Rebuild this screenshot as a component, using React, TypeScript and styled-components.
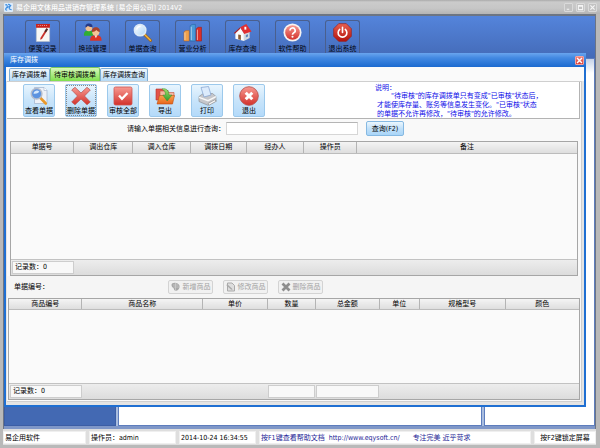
import React, { useState } from 'react';
import styled, { createGlobalStyle, css } from 'styled-components';

const GlobalStyle = createGlobalStyle`
  *, *::before, *::after { box-sizing: border-box; }
  html, body { margin: 0; padding: 0; }
  body, button, input, table {
    font-family: "DejaVu Sans Condensed", "Noto Sans CJK SC", sans-serif;
    font-size: 7px;
    line-height: 10px;
    color: #000;
  }
  button { cursor: pointer; }
`;

/* ---------- main window ---------- */

const Window = styled.div`
  position: relative;
  display: flex;
  flex-direction: column;
  min-height: 100vh;
  background: #b9b9b9;
  padding: 0 4px 3px 3px;
  overflow: hidden;
`;

const TitleBar = styled.header`
  display: flex;
  align-items: center;
  gap: 3px;
  height: 14px;
  margin: 0 -4px 0 -3px;
  padding: 1px 3px 0 4px;
  background: linear-gradient(#aaa 0, #cbcbcb 2px, #c6c6c6 60%, #b4b4b4);
  color: #fff;
`;

const TitleText = styled.h1`
  flex: 1;
  margin: 0;
  font-size: 7px;
  font-weight: 500;
  white-space: pre;
`;

const WindowButton = styled.button`
  display: flex;
  align-items: center;
  justify-content: center;
  width: 9px;
  height: 9px;
  padding: 0;
  border: 1px solid #dadada;
  border-radius: 1px;
  background: #c2c2c2;
`;

const Desktop = styled.main`
  flex: 1;
  display: flex;
  flex-direction: column;
  border: 1px solid #6c7484;
  border-top: 2px solid #6d7582;
  border-bottom: 0;
  background: #4369b3;
`;

const Ribbon = styled.nav`
  display: flex;
  gap: 15px;
  height: 42px;
  padding: 4px 21px 0;
  background: linear-gradient(#5484db, #446bb8);
`;

const RibbonButton = styled.button`
  display: flex;
  flex-direction: column;
  align-items: center;
  gap: 2px;
  width: 35px;
  height: 34px;
  padding: 2px 0 0;
  border: 1px solid #4a5f8d;
  border-bottom: 0;
  border-radius: 3px 3px 0 0;
  background: transparent;
  color: #00040c;
  white-space: nowrap;
`;

const Workspace = styled.div`
  flex: 1;
  display: grid;
  grid-template-columns: 112fr 364fr 111fr;
  gap: 2px;
  border-bottom: 3px solid #7f97c8;
  background: #a9bddf;
`;

const Pane = styled.section<{ $side?: boolean }>`
  border: 1px solid ${p => (p.$side ? '#3c5ea5' : '#5d7dbd')};
  background: ${p => (p.$side ? '#4369b3' : 'linear-gradient(#c5d2e8, #fff 14px)')};
`;

const StatusBar = styled.footer`
  display: grid;
  grid-template-columns: 83fr 87fr 77fr 272fr 62fr;
  gap: 3px;
  padding: 2px 0 1px;
  background: #dedede;
`;

const StatusCell = styled.div<{ $link?: boolean; $end?: boolean }>`
  display: flex;
  align-items: center;
  height: 13px;
  padding: 0 1px;
  border: 1px solid #efefef;
  background: #fff;
  color: ${p => (p.$link ? '#1c1c96' : '#000')};
  justify-content: ${p => (p.$end ? 'center' : 'flex-start')};
  white-space: pre;
`;

const SiteLink = styled.a`
  margin: 0 13px 0 4px;
  color: inherit;
  text-decoration: none;
`;

/* ---------- dialog ---------- */

const Dialog = styled.section`
  position: absolute;
  inset: 53px 14px 41px 4px;
  display: flex;
  flex-direction: column;
  border: 2px solid #1f6fd2;
  border-top: 0;
  background: #e4e4e4;
`;

const DialogTitle = styled.header`
  display: flex;
  align-items: center;
  justify-content: space-between;
  flex: none;
  height: 14px;
  margin: 0 -2px;
  padding: 0 2px 0 6px;
  background: linear-gradient(#6aa5ee 0, #4389e2 35%, #1b6ad0);
  color: #fff;
`;

const DialogName = styled.h2`
  margin: 0;
  font-size: 7px;
  font-weight: 400;
`;

const CloseButton = styled.button`
  display: flex;
  align-items: center;
  justify-content: center;
  width: 9px;
  height: 9px;
  padding: 0;
  border: 1px solid #f4a19b;
  border-radius: 1px;
  background: linear-gradient(#ef7b74, #d93d35);
`;

const Tabs = styled.div`
  display: flex;
  align-items: flex-end;
  flex: none;
  height: 14px;
  padding-left: 3px;
  background: #fafafa;
`;

const Tab = styled.button<{ $active: boolean }>`
  height: ${p => (p.$active ? '14px' : '13px')};
  padding: 0 2px;
  border: 1px solid #7faed6;
  border-bottom: 0;
  border-radius: 2px 2px 0 0;
  background: linear-gradient(#f0f8fe, #b5d9f5);
  white-space: nowrap;
  ${p =>
    p.$active &&
    css`
      padding: 0 3px;
      border-color: #7cc660;
      background: linear-gradient(#d8f8bc, #7fe04c);
    `}
`;

const Panel = styled.div`
  flex: 1;
  display: flex;
  flex-direction: column;
  margin: 0 2px 3px 1px;
  padding-right: 1px;
  border: 1px solid #cfcfcf;
  border-left: 0;
  background: #f9f9f9;
`;

const ToolRow = styled.div`
  display: flex;
  align-items: flex-start;
  flex: none;
  height: 37px;
  padding: 2px 0 0 16px;
  border-bottom: 1px solid #b3b3b3;
  border-right: 1px solid #b3b3b3;
  background: #fff;
`;

const Tools = styled.div`
  display: flex;
  flex: 1;
  gap: 10px;
`;

const ToolButton = styled.button<{ $focused?: boolean }>`
  display: flex;
  flex-direction: column;
  align-items: center;
  justify-content: space-between;
  width: 32px;
  height: 33px;
  padding: 1px 0 0;
  border: 1px solid #9cc9ec;
  border-radius: 2px;
  background: linear-gradient(#e8f5fe, #c8e4fa 50%, #b4dafa);
  outline: ${p => (p.$focused ? '1px dotted #888' : 'none')};
  outline-offset: -2px;
  white-space: nowrap;
`;

const Notes = styled.div`
  flex: none;
  width: 204px;
  padding-top: 1px;
  color: #0d0de8;
  line-height: 9px;
  white-space: nowrap;
`;

const NotesTitle = styled.h3`
  margin: 0;
  font-size: 7px;
  font-weight: 400;
  line-height: 7px;
`;

const NotesText = styled.p`
  margin: 0;
  padding-left: 2px;
  text-indent: 14px;
`;

const SearchRow = styled.form`
  display: flex;
  align-items: center;
  flex: none;
  height: 22px;
  padding: 0 0 3px 120px;
`;

const SearchInput = styled.input`
  width: 132px;
  height: 13px;
  margin: 0 8px 0 1px;
  padding: 0 2px;
  border: 1px solid #d6d6d6;
  border-top-color: #b5b5b5;
  background: #fff;
`;

const SearchButton = styled.button`
  width: 38px;
  height: 15px;
  padding: 0;
  border: 1px solid #86b9e2;
  border-radius: 2px;
  background: linear-gradient(#ecf7fe, #c2e1f9 50%, #a9d5f8);
  white-space: nowrap;
`;

const DataGrid = styled.section<{ $grow: number; $inset?: boolean }>`
  display: flex;
  flex-direction: column;
  flex: ${p => p.$grow} 1 0;
  margin: ${p => (p.$inset ? '0 2px 0 3px' : '0 0 1px 1px')};
  border: 1px solid #a6a6a6;
  background: #fafafa;
`;

const Table = styled.table`
  width: 100%;
  table-layout: fixed;
  border-collapse: collapse;
`;

const HeadCell = styled.th`
  height: 11px;
  padding: 0;
  border-right: 1px solid #b4b4b4;
  border-bottom: 1px solid #bcbcbc;
  background: linear-gradient(#f4f4f4, #dedede);
  font-weight: 400;
  line-height: 10px;
  text-align: center;
  white-space: nowrap;
  &:last-child { border-right: 0; }
`;

const GridFooter = styled.div<{ $columns: string }>`
  display: grid;
  grid-template-columns: ${p => p.$columns};
  margin-top: auto;
  height: 16px;
  padding: 1px 0 2px 1px;
  border-top: 1px solid #c2c2c2;
  background: linear-gradient(#ededed, #dcdcdc);
`;

const Summary = styled.div<{ $column: number }>`
  grid-column: ${p => p.$column};
  margin-right: 1px;
  padding: 0 2px;
  border: 1px solid #cdcdcd;
  background: #f8f8f8;
  line-height: 11px;
  white-space: pre;
`;

const ItemRow = styled.div`
  display: flex;
  align-items: center;
  flex: none;
  gap: 10px;
  height: 22px;
  padding-left: 7px;
  background: #f5f5f5;
`;

const ItemLabel = styled.span`
  width: 144px;
`;

const ItemButton = styled.button`
  display: flex;
  align-items: center;
  justify-content: center;
  gap: 2px;
  width: 45px;
  height: 14px;
  padding: 0;
  border: 1px solid #d3d3d3;
  border-radius: 2px;
  background: #f1f1f1;
  color: #a2a2a2;
  white-space: nowrap;
`;

/* ---------- icons ---------- */

const Glyph = styled.svg<{ $size: number }>`
  display: block;
  flex: none;
  width: ${p => p.$size}px;
  height: ${p => p.$size}px;
`;

type IconProps = { size: number; children: React.ReactNode };
const Icon = ({ size, children }: IconProps) => (
  <Glyph $size={size} viewBox="0 0 20 20" aria-hidden="true">{children}</Glyph>
);

const Gradients = () => (
  <Glyph $size={0} aria-hidden="true">
    <defs>
      <linearGradient id="red" x1="0" y1="0" x2="0" y2="1">
        <stop offset="0" stopColor="#f79a92" /><stop offset="1" stopColor="#d3312b" />
      </linearGradient>
      <linearGradient id="deepRed" x1="0" y1="0" x2="0" y2="1">
        <stop offset="0" stopColor="#e8604f" /><stop offset="1" stopColor="#b3120c" />
      </linearGradient>
      <linearGradient id="lens" x1="0" y1="0" x2="1" y2="1">
        <stop offset="0" stopColor="#ffffff" /><stop offset="1" stopColor="#a9d3f6" />
      </linearGradient>
      <linearGradient id="folder" x1="0" y1="0" x2="0" y2="1">
        <stop offset="0" stopColor="#f8a24c" /><stop offset="1" stopColor="#e8661c" />
      </linearGradient>
      <linearGradient id="green" x1="0" y1="0" x2="0" y2="1">
        <stop offset="0" stopColor="#a5e06c" /><stop offset="1" stopColor="#2f9c2b" />
      </linearGradient>
    </defs>
  </Glyph>
);

const ribbonIcons = {
  note: (
    <>
      <path d="M3.500 2h14v17.500h-14z" fill="#f7f7f4" stroke="#b9bdc6" strokeWidth=".6" />
      <path d="M3.200 1h14.600v4H3.200z" fill="#c8201b" />
      <path d="M5 2.600h11" stroke="#f1a7a2" strokeDasharray="1 1.2" />
      <path d="M14.200 5.500l1.600 1L9.400 16.800l-1.800.9.200-2z" fill="#c9332c" />
      <path d="M14.200 5.500l1.600 1-2.200 3.400-1.600-1.100z" fill="#4a2a28" />
    </>
  ),
  people: (
    <>
      <path d="M1 12c0-3 2-4 5-4s5 1 5 4v1.500H1z" fill="#2fae32" />
      <circle cx="6.200" cy="5" r="3.600" fill="#f2c08f" />
      <path d="M2.500 5C2.200 1.600 4 .4 6.400.4S10.400 2 10 4.500C8 4.600 6 3.600 5 3.200 4.300 4.200 3.500 4.700 2.500 5z" fill="#263a86" />
      <path d="M7.500 18c0-4 2.500-5 6-5s6 1 6 5v.8h-12z" fill="#dc3325" />
      <path d="M12.300 13l1.300 3 1.300-3z" fill="#fff" />
      <circle cx="13.500" cy="9.600" r="3.800" fill="#f5c596" />
      <path d="M9.400 9.600c-.4-3.200 1.600-5 4.200-5s4.500 1.700 4.100 5c-1.500-.4-2.700-1.300-3.500-2.200-1.200 1.200-2.800 2-4.800 2.200z" fill="#a8412a" />
    </>
  ),
  search: (
    <>
      <path d="M12 12l6.500 6.500" stroke="#9b6420" strokeWidth="3" strokeLinecap="round" />
      <path d="M12.500 12.300l5.800 5.800" stroke="#f2b73f" strokeWidth="1.500" strokeLinecap="round" />
      <circle cx="7.500" cy="7.500" r="6" fill="url(#lens)" stroke="#dce9f6" strokeWidth="1.600" />
      <path d="M4 7a4 4 0 0 1 4-3.500" fill="none" stroke="#fff" strokeWidth="1.200" />
    </>
  ),
  chart: (
    <>
      <path d="M1 9.500l2-1.500h3.500v11H1z" fill="#f0a04b" stroke="#b55b12" strokeWidth=".5" />
      <path d="M7.500 3l2-1.500H13V19H7.500z" fill="#4a9ad8" stroke="#1e5d9b" strokeWidth=".5" />
      <path d="M14 6l2-1.500h3.500V19H14z" fill="#dc2f27" stroke="#971510" strokeWidth=".5" />
      <path d="M2 10v8M8.700 4v14M15.200 7v11" stroke="#ffffff90" />
    </>
  ),
  house: (
    <>
      <path d="M2.500 10l5-5 4 5.500V19l-9-2.500z" fill="#fbfbfb" />
      <path d="M11.500 10.500l6-1.200v6.500L11.500 19z" fill="#d5d9df" />
      <path d="M7.500 4.500L14 1l5.500 8-7.700 2.500z" fill="#e22f31" />
      <path d="M7.500 4.500L1 10.500l1 .7 5.400-4.800z" fill="#a81f24" />
      <path d="M12 4h2v3h-2z" fill="#fff" />
      <path d="M5.500 12l2.800.7v5.100l-2.800-.8z" fill="#8b5a32" />
      <path d="M13.500 12.500l2.300-.6v2.400l-2.300.9z" fill="#5d87b8" />
    </>
  ),
  help: (
    <>
      <circle cx="10" cy="10" r="9.500" fill="#f6f3f2" />
      <circle cx="10" cy="10" r="7.700" fill="url(#red)" />
      <path d="M7.400 8a2.700 2.700 0 1 1 4 2.300c-1 .6-1.400 1-1.400 2" fill="none" stroke="#fff" strokeWidth="1.800" />
      <circle cx="10" cy="14.400" r="1.100" fill="#fff" />
    </>
  ),
  power: (
    <>
      <path d="M6 .7h8L19.300 6v8L14 19.300H6L.7 14V6z" fill="url(#deepRed)" stroke="#9c1d17" strokeWidth=".7" />
      <path d="M7 6.800a4.600 4.600 0 1 0 6 0M10 4.500v5.500" fill="none" stroke="#fff" strokeWidth="1.700" strokeLinecap="round" />
    </>
  ),
};

const toolIcons = {
  view: (
    <>
      <path d="M5.500 1.500h9.500l3 3v13H5.500z" fill="#eef1f7" stroke="#9db0cc" strokeWidth=".7" />
      <path d="M15 1.500v3h3" fill="#fff" stroke="#9db0cc" strokeWidth=".6" />
      <path d="M11.500 12l5.300 5.500" stroke="#e9992b" strokeWidth="2.600" strokeLinecap="round" />
      <circle cx="7.600" cy="7.800" r="5.300" fill="#5c93e0" stroke="#b4bccb" strokeWidth="1.500" />
      <path d="M4.400 7.500a3.500 3.500 0 0 1 6-1.800c-1.500 1.700-3.600 2.300-6 1.800z" fill="#d5e8fc" />
    </>
  ),
  remove: (
    <path
      d="M4 1.300L10 7l6-5.700L19.300 4 13.500 10l5.800 6-3.300 2.700-6-5.700-6 5.700L.7 16l5.800-6L.7 4z"
      fill="url(#red)" stroke="#b8504c" strokeWidth=".7" strokeLinejoin="round"
    />
  ),
  audit: (
    <>
      <rect x="1" y="1" width="18" height="18" rx="1.500" fill="url(#red)" stroke="#cf5550" strokeWidth=".8" />
      <path d="M6 9.500l3 3.300L14.500 7" fill="none" stroke="#fff" strokeWidth="2.300" />
    </>
  ),
  exporting: (
    <>
      <path d="M1 3h6l1.200 1.500H13V14H1z" fill="#e2534a" stroke="#b6312a" strokeWidth=".6" />
      <path d="M5 5h6l1.200 1.500H19V11H5z" fill="#f5b7a2" stroke="#c5533b" strokeWidth=".6" />
      <path d="M2 18l2.500-8.500h15L17.500 18z" fill="url(#folder)" stroke="#bf4b12" strokeWidth=".6" />
      <path d="M7 2.800c4.500-.7 7 1.700 7 6.200h3l-4.800 6L7.800 9h2.700c0-3-1-4.700-3.500-6.200z" fill="url(#green)" stroke="#3e8a2a" strokeWidth=".5" />
    </>
  ),
  print: (
    <>
      <path d="M2 10.500L5.500 8l10-.5 3.500 3v4.500L11 19.300l-9-3.800z" fill="#c6c7cb" stroke="#85878c" strokeWidth=".6" />
      <path d="M4 1.500l7.500-1L14 9l-7 2z" fill="#dcebfc" stroke="#7f9fce" strokeWidth=".7" />
      <path d="M2 11.300l9 3.400 8-4" fill="none" stroke="#f8f8f8" strokeWidth="1.400" />
      <path d="M11 17.500l6.500-3.600 2 1.200-7.500 4.200z" fill="#f7f7f7" stroke="#777" strokeWidth=".5" />
    </>
  ),
  exit: (
    <>
      <circle cx="10" cy="10" r="9.300" fill="url(#red)" stroke="#b8544f" strokeWidth=".9" />
      <path d="M6.700 6.700l6.600 6.600M13.300 6.700l-6.600 6.600" stroke="#fff" strokeWidth="3" />
    </>
  ),
};

const itemIcons = {
  add: (
    <>
      <path d="M1 6c0-3 4-5 9-4s8 4 7 9-5 7-9 6c-2-.5-2-3-3-5C3 11 1 9 1 6z" fill="#a8a8a8" />
      <path d="M4 6h11M5 10h11M9 2v14" stroke="#d0d0d0" strokeWidth="1.400" />
    </>
  ),
  edit: (
    <>
      <path d="M3 2h9l5 5v11H3z" fill="#dedede" stroke="#aaa" strokeWidth="2" />
      <path d="M2 4l10 9 1 3-3-1L1 7z" fill="#aaa" />
    </>
  ),
  remove: <path d="M3 3l14 14M17 3L3 17" stroke="#8e8e8e" strokeWidth="5.500" />,
};

/* ---------- data ---------- */

const ribbon: [keyof typeof ribbonIcons, string][] = [
  ['note', '便笺记录'], ['people', '换班管理'], ['search', '单据查询'], ['chart', '营业分析'],
  ['house', '库存查询'], ['help', '软件帮助'], ['power', '退出系统'],
];

const tools: [keyof typeof toolIcons, string][] = [
  ['view', '查看单据'], ['remove', '删除单据'], ['audit', '审核全部'],
  ['exporting', '导出'], ['print', '打印'], ['exit', '退出'],
];

const itemActions: [keyof typeof itemIcons, string][] = [
  ['add', '新增商品'], ['edit', '修改商品'], ['remove', '删除商品'],
];

const tabs = ['库存调拨单', '待审核调拨单', '库存调拨查询'];

type Column = { label: string; share: number; total?: boolean };

const orders: Column[] = [
  { label: '单据号', share: 63 }, { label: '调出仓库', share: 59 }, { label: '调入仓库', share: 58 },
  { label: '调拨日期', share: 56 }, { label: '经办人', share: 58 }, { label: '操作员', share: 53 },
  { label: '备注', share: 221 },
];

const goods: Column[] = [
  { label: '商品编号', share: 73 }, { label: '商品名称', share: 121 }, { label: '单价', share: 65 },
  { label: '数量', share: 48, total: true }, { label: '总金额', share: 64, total: true },
  { label: '单位', share: 40 }, { label: '规格型号', share: 86 }, { label: '颜色', share: 74 },
];

type RecordGridProps = { columns: Column[]; grow: number; inset?: boolean };

function RecordGrid({ columns, grow, inset }: RecordGridProps) {
  const sum = columns.reduce((n, c) => n + c.share, 0);
  return (
    <DataGrid $grow={grow} $inset={inset}>
      <Table>
        <colgroup>
          {columns.map(c => <col key={c.label} width={`${(c.share / sum) * 100}%`} />)}
        </colgroup>
        <thead>
          <tr>{columns.map(c => <HeadCell key={c.label} scope="col">{c.label}</HeadCell>)}</tr>
        </thead>
        <tbody />
      </Table>
      <GridFooter $columns={columns.map(c => `minmax(0, ${c.share}fr)`).join(' ')}>
        <Summary $column={1}>记录数：0</Summary>
        {columns.map((c, i) => (c.total ? <Summary key={c.label} $column={i + 1} /> : null))}
      </GridFooter>
    </DataGrid>
  );
}

export default function App() {
  const [tab, setTab] = useState(1);
  return (
    <Window>
      <GlobalStyle />
      <Gradients />
      <TitleBar>
        <Icon size={9}>
          <rect width="20" height="20" rx="2" fill="#dcebfb" />
          <path d="M3 5c3-4 6 2 3 5s-4 5 1 6M9 3c5 0 6 3 4 6s-3 5 4 6M3 13l13-8" fill="none" stroke="#3f8fe0" strokeWidth="2.400" />
        </Icon>
        <TitleText>易企用文体用品进销存管理系统 [易企用公司] 2014V2</TitleText>
        <WindowButton aria-label="最小化">
          <Icon size={7}><path d="M5 15h7" stroke="#f5f5f5" strokeWidth="3" /></Icon>
        </WindowButton>
        <WindowButton aria-label="最大化">
          <Icon size={7}><path d="M4 4h12v12H4zM4 6h12" fill="none" stroke="#f5f5f5" strokeWidth="3" /></Icon>
        </WindowButton>
        <WindowButton aria-label="关闭">
          <Icon size={7}><path d="M4 4l12 12M16 4L4 16" stroke="#f5f5f5" strokeWidth="3.500" /></Icon>
        </WindowButton>
      </TitleBar>

      <Desktop>
        <Ribbon>
          {ribbon.map(([icon, label]) => (
            <RibbonButton key={label}>
              <Icon size={19}>{ribbonIcons[icon]}</Icon>
              {label}
            </RibbonButton>
          ))}
        </Ribbon>
        <Workspace>
          <Pane $side />
          <Pane />
          <Pane />
        </Workspace>
      </Desktop>

      <StatusBar>
        <StatusCell>易企用软件</StatusCell>
        <StatusCell>操作员：admin</StatusCell>
        <StatusCell>2014-10-24 16:34:55</StatusCell>
        <StatusCell $link>
          按F1键查看帮助文档
          <SiteLink href="http://www.eqysoft.cn/">http://www.eqysoft.cn/</SiteLink>
          专注完美 近乎苛求
        </StatusCell>
        <StatusCell $end>按F2键锁定屏幕</StatusCell>
      </StatusBar>

      <Dialog role="dialog" aria-label="库存调拨">
        <DialogTitle>
          <DialogName>库存调拨</DialogName>
          <CloseButton aria-label="关闭">
            <Icon size={7}><path d="M3 3l14 14M17 3L3 17" stroke="#fff" strokeWidth="4" /></Icon>
          </CloseButton>
        </DialogTitle>
        <Tabs role="tablist">
          {tabs.map((label, i) => (
            <Tab key={label} role="tab" aria-selected={i === tab} $active={i === tab} onClick={() => setTab(i)}>
              {label}
            </Tab>
          ))}
        </Tabs>
        <Panel>
          <ToolRow>
            <Tools>
              {tools.map(([icon, label]) => (
                <ToolButton key={label} $focused={icon === 'remove'}>
                  <Icon size={20}>{toolIcons[icon]}</Icon>
                  {label}
                </ToolButton>
              ))}
            </Tools>
            <Notes>
              <NotesTitle>说明：</NotesTitle>
              <NotesText>
                "待审核"的库存调拨单只有变成"已审核"状态后，<br />
                才能使库存量、账务等信息发生变化。"已审核"状态<br />
                的单据不允许再修改，"待审核"的允许修改。
              </NotesText>
            </Notes>
          </ToolRow>
          <SearchRow onSubmit={e => e.preventDefault()}>
            <label htmlFor="keyword">请输入单据相关信息进行查询：</label>
            <SearchInput id="keyword" />
            <SearchButton type="submit">查询(F2)</SearchButton>
          </SearchRow>
          <RecordGrid columns={orders} grow={135} inset />
          <ItemRow>
            <ItemLabel>单据编号：</ItemLabel>
            {itemActions.map(([icon, label]) => (
              <ItemButton key={label} disabled>
                <Icon size={10}>{itemIcons[icon]}</Icon>
                {label}
              </ItemButton>
            ))}
          </ItemRow>
          <RecordGrid columns={goods} grow={102} />
        </Panel>
      </Dialog>
    </Window>
  );
}
